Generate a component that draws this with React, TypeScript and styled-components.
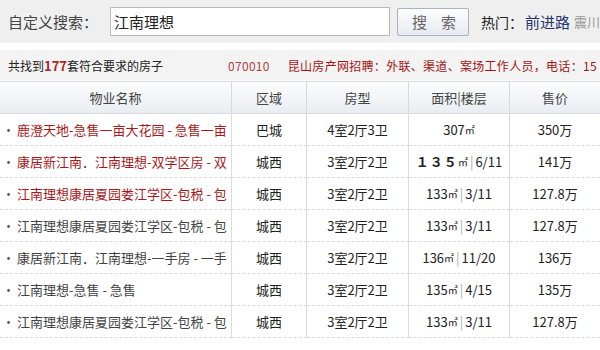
import React from "react";
import styled, { createGlobalStyle } from "styled-components";

const Global = createGlobalStyle`
  html, body { margin: 0; padding: 0; background: #fff; }
  body { font-family: "Noto Sans CJK SC", "Liberation Sans", sans-serif; color: #333; width: 600px; overflow: hidden; }
`;

const Page = styled.div`
  width: 600px;
  height: 350px;
  overflow: hidden;
  display: flex;
  flex-direction: column;
`;

const SearchBar = styled.div`
  height: 43px;
  background: #efefef;
  display: flex;
  align-items: center;
  padding-left: 8px;
  white-space: nowrap;
  overflow: hidden;
  flex: none;
`;

const Label = styled.span`
  font-size: 15px;
  color: #444;
  width: 102px;
  flex: none;
`;

const Input = styled.div`
  box-sizing: border-box;
  width: 280px;
  height: 29px;
  flex: none;
  background: #fff;
  border: 1px solid #b9b9b9;
  font-size: 15px;
  line-height: 27px;
  padding-left: 3px;
  color: #222;
`;

const Button = styled.div`
  box-sizing: border-box;
  flex: none;
  margin-left: 7px;
  width: 72px;
  height: 28px;
  border: 1px solid #a9b2c0;
  border-radius: 2px;
  background: linear-gradient(#fdfdfd, #e6eaf0);
  color: #666;
  font-size: 15px;
  line-height: 26px;
  text-align: center;
  letter-spacing: 14px;
  text-indent: 14px;
`;

const HotLabel = styled.span`
  margin-left: 12px;
  font-size: 14px;
  color: #222;
  flex: none;
`;

const HotLink = styled.span<{ $muted?: boolean }>`
  margin-left: ${(p) => (p.$muted ? "4px" : "2px")};
  font-size: ${(p) => (p.$muted ? "13px" : "15px")};
  color: ${(p) => (p.$muted ? "#999" : "#1f3670")};
  flex: none;
`;

const Gap = styled.div`
  height: 7px;
  flex: none;
`;

const InfoBar = styled.div`
  height: 30px;
  background: #f3f3f3;
  display: flex;
  align-items: center;
  padding-left: 8px;
  white-space: nowrap;
  overflow: hidden;
  font-size: 12px;
  flex: none;
`;

const Found = styled.span`
  width: 220px;
  flex: none;
  color: #222;
`;

const Count = styled.b`
  color: #b02525;
  font-size: 13px;
`;

const Marquee = styled.span`
  color: #a31515;
  font-size: 12px;
  letter-spacing: 0.3px;
`;

const Code = styled.span`
  color: #b04040;
  margin-right: 18px;
`;

const Table = styled.div`
  display: grid;
  grid-template-columns: 232px 75px 102px 101px 90px;
  border-top: 1px solid #dadada;
  margin-top: 1px;
`;

const HeadCell = styled.div<{ $last?: boolean }>`
  height: 31px;
  display: flex;
  align-items: center;
  justify-content: center;
  background: linear-gradient(#fbfcfd, #e9edf1);
  border-right: ${(p) => (p.$last ? "none" : "1px solid #d6d9dd")};
  border-bottom: 1px solid #d8dbdf;
  font-size: 13px;
  color: #444;
`;

const Cell = styled.div<{ $last?: boolean; $left?: boolean }>`
  height: 31px;
  display: flex;
  align-items: center;
  justify-content: ${(p) => (p.$left ? "flex-start" : "center")};
  border-right: ${(p) => (p.$last ? "none" : "1px solid #dcdcdc")};
  border-bottom: 1px dashed #d9d9d9;
  font-size: 13px;
  color: #222;
  white-space: nowrap;
  overflow: hidden;
`;

const NameText = styled.span<{ $hot?: boolean }>`
  color: ${(p) => (p.$hot ? "#a8191c" : "#444")};
  padding-left: 2px;
  overflow: hidden;
  width: 226px;
`;

const Bullet = styled.span`
  color: #555;
  margin-right: 2px;
`;

const Sqm = styled.span`
  font-size: 10px;
  vertical-align: 3px;
`;

const Sep = styled.span`
  color: #aaa;
  margin: 0 2px;
`;

const BigNum = styled.span`
  font-weight: bold;
  font-size: 13px;
  letter-spacing: 1px;
`;

type Row = {
  name: string;
  hot: boolean;
  area: string;
  type: string;
  size: string;
  floor?: string;
  big?: boolean;
  price: string;
};

const rows: Row[] = [
  { name: "鹿澄天地-急售一亩大花园 - 急售一亩", hot: true, area: "巴城", type: "4室2厅3卫", size: "307", price: "350万" },
  { name: "康居新江南．江南理想-双学区房 - 双", hot: true, area: "城西", type: "3室2厅2卫", size: "１３５", floor: "6/11", big: true, price: "141万" },
  { name: "江南理想康居夏园娄江学区-包税 - 包", hot: true, area: "城西", type: "3室2厅2卫", size: "133", floor: "3/11", price: "127.8万" },
  { name: "江南理想康居夏园娄江学区-包税 - 包", hot: false, area: "城西", type: "3室2厅2卫", size: "133", floor: "3/11", price: "127.8万" },
  { name: "康居新江南．江南理想-一手房 - 一手", hot: false, area: "城西", type: "3室2厅2卫", size: "136", floor: "11/20", price: "136万" },
  { name: "江南理想-急售 - 急售", hot: false, area: "城西", type: "3室2厅2卫", size: "135", floor: "4/15", price: "135万" },
  { name: "江南理想康居夏园娄江学区-包税 - 包", hot: false, area: "城西", type: "3室2厅2卫", size: "133", floor: "3/11", price: "127.8万" },
];

export default function App() {
  return (
    <Page>
      <Global />
      <SearchBar>
        <Label>自定义搜索：</Label>
        <Input>江南理想</Input>
        <Button>搜索</Button>
        <HotLabel>热门：</HotLabel>
        <HotLink>前进路</HotLink>
        <HotLink $muted>震川路</HotLink>
      </SearchBar>
      <Gap />
      <InfoBar>
        <Found>
          共找到<Count>177</Count>套符合要求的房子
        </Found>
        <Marquee>
          <Code>070010</Code>昆山房产网招聘：外联、渠道、案场工作人员，电话：15
        </Marquee>
      </InfoBar>
      <Table>
        <HeadCell>物业名称</HeadCell>
        <HeadCell>区域</HeadCell>
        <HeadCell>房型</HeadCell>
        <HeadCell>面积|楼层</HeadCell>
        <HeadCell $last>售价</HeadCell>
        {rows.map((r, i) => (
          <React.Fragment key={i}>
            <Cell $left>
              <NameText $hot={r.hot}>
                <Bullet>·</Bullet>
                {r.name}
              </NameText>
            </Cell>
            <Cell>{r.area}</Cell>
            <Cell>{r.type}</Cell>
            <Cell>
              {r.big ? <BigNum>{r.size}</BigNum> : r.size}
              <Sqm>㎡</Sqm>
              {r.floor && (
                <>
                  <Sep>|</Sep>
                  {r.floor}
                </>
              )}
            </Cell>
            <Cell $last>{r.price}</Cell>
          </React.Fragment>
        ))}
      </Table>
    </Page>
  );
}
